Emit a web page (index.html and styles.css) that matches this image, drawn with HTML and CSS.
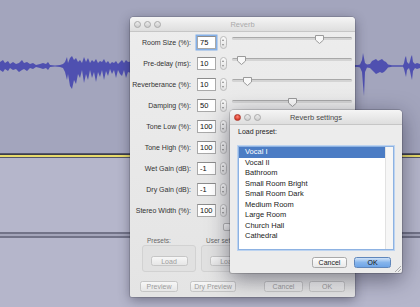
FILE: index.html
```html
<!DOCTYPE html>
<html lang="en">
<head>
  <meta charset="UTF-8" />
  <title>Reverb</title>
  <link rel="stylesheet" href="styles.css">
</head>
<body>

  <!-- Project window behind the dialogs -->
  <div class="project">
    <div class="track track-top">
      <svg class="wave" width="420" height="153" viewBox="0 0 420 153">
        <polygon points="0,62 3,60 5,63 8,61 10,64 13,62 16,64 19,63 22,60 24,63 27,62 30,64 33,63 36,65 40,64 43,63 46,64 48,62 50,65 55,65.5 60,65 63,64 65,62 67,57 68,63 70,58 72,56 74,60 76,58 78,62 80,60 82,63 84,57 86,62 88,58 90,63 92,60 94,62 96,59 98,63 100,61 102,62 104,59 106,63 108,61 110,64 112,62 114,63 116,61 118,64 120,62 122,60 124,63 126,60 128,62 134,61 134,74 128,72 126,78 124,70 122,76 120,74 118,70 116,78 114,70 112,74 110,69 108,76 106,71 104,80 102,70 100,77 98,72 96,82 94,72 92,78 90,70 88,80 86,74 84,83 82,70 80,78 78,74 76,84 74,80 72,89 70,86 68,74 67,80 65,72 63,68 60,67 55,66.5 50,67 48,70 46,68 43,69 40,68 36,67 33,69 30,68 27,71 24,69 22,70 19,72 16,69 13,70 10,68 8,71 5,69 3,72 0,70"/>
        <polygon points="345,65 358,65 360,64.5 362,60 363,53 364,58 365,63 367,64.5 370,64 372,61 374,60 376,59 378,61 380,60 382,59 384,61 386,62 388,64.5 392,65.2 403,65.2 404,63 405,58 406,56 407,62 409,64 410,61 411,57 412,55 413,62 415,64 417,63 420,64 420,68 417,69 415,68 413,71 412,80 411,76 410,71 409,68 407,70 406,77 405,73 404,69 403,66.8 392,66.8 388,67.5 386,70 384,72 382,73 380,72 378,73 376,74 374,72 372,70 370,68 367,67.5 365,72 364,96 363,85 362,72 360,67.5 358,67 345,67"/>
      </svg>
    </div>
    <div class="track-edge"></div>
    <div class="track track-low"></div>
    <div class="track-gap"></div>
    <div class="track track-low rest"></div>
  </div>

  <!-- Reverb effect dialog -->
  <div class="window reverb">
    <div class="titlebar">
      <span class="lights"><i></i><i></i><i></i></span>
      <span class="title">Reverb</span>
    </div>

    <div class="params">
      <label>Room Size (%):</label><span class="field focus">75</span><span class="spin"></span>
      <div class="slider"><svg class="thumb" style="left: 73%" width="9" height="9" viewBox="0 0 9 9"><path d="M0.5 0.5H8.5V5L4.5 8.5L0.5 5Z"/></svg></div>

      <label>Pre-delay (ms):</label><span class="field">10</span><span class="spin"></span>
      <div class="slider"><svg class="thumb" style="left: 8%" width="9" height="9" viewBox="0 0 9 9"><path d="M0.5 0.5H8.5V5L4.5 8.5L0.5 5Z"/></svg></div>

      <label>Reverberance (%):</label><span class="field">10</span><span class="spin"></span>
      <div class="slider"><svg class="thumb" style="left: 13%" width="9" height="9" viewBox="0 0 9 9"><path d="M0.5 0.5H8.5V5L4.5 8.5L0.5 5Z"/></svg></div>

      <label>Damping (%):</label><span class="field">50</span><span class="spin"></span>
      <div class="slider"><svg class="thumb" style="left: 50%" width="9" height="9" viewBox="0 0 9 9"><path d="M0.5 0.5H8.5V5L4.5 8.5L0.5 5Z"/></svg></div>

      <label>Tone Low (%):</label><span class="field">100</span><span class="spin"></span>
      <div class="slider"></div>

      <label>Tone High (%):</label><span class="field">100</span><span class="spin"></span>
      <div class="slider"></div>

      <label>Wet Gain (dB):</label><span class="field">-1</span><span class="spin"></span>
      <div class="slider"></div>

      <label>Dry Gain (dB):</label><span class="field">-1</span><span class="spin"></span>
      <div class="slider"></div>

      <label>Stereo Width (%):</label><span class="field">100</span><span class="spin"></span>
      <div class="slider"></div>
    </div>

    <div class="check-row"><span class="check"></span></div>

    <div class="groups">
      <div class="group">
        <div class="group-label">Presets:</div>
        <div class="group-box"><span class="btn load">Load</span></div>
      </div>
      <div class="group">
        <div class="group-label">User settings:</div>
        <div class="group-box"><span class="btn load">Load</span></div>
      </div>
    </div>

    <div class="actions">
      <span class="btn preview">Preview</span>
      <span class="btn dry">Dry Preview</span>
      <span class="spacer"></span>
      <span class="btn cancel">Cancel</span>
      <span class="btn okay">OK</span>
    </div>
  </div>

  <!-- Preset sheet -->
  <div class="window settings">
    <div class="titlebar">
      <span class="lights"><i class="close"></i><i></i><i></i></span>
      <span class="title active">Reverb settings</span>
    </div>
    <div class="sheet">
      <div class="sheet-label">Load preset:</div>
      <div class="list">
        <div class="items">
          <div class="sel">Vocal I</div>
          <div>Vocal II</div>
          <div>Bathroom</div>
          <div>Small Room Bright</div>
          <div>Small Room Dark</div>
          <div>Medium Room</div>
          <div>Large Room</div>
          <div>Church Hall</div>
          <div>Cathedral</div>
        </div>
        <div class="gutter"></div>
      </div>
      <div class="sheet-actions">
        <span class="btn plain">Cancel</span>
        <span class="btn default">OK</span>
      </div>
    </div>
    <svg class="grip" width="7" height="7" viewBox="0 0 7 7"><path d="M7 1L1 7M7 4L4 7"/></svg>
  </div>

</body>
</html>
```

FILE: styles.css
```css
* {
  box-sizing: border-box;
}

body {
  margin: 0;
  width: 420px;
  height: 307px;
  overflow: hidden;
  position: relative;
  background: #b5b6cb;
  font-family: 'Liberation Sans', Arial, sans-serif;
  color: #222;
}

/* project tracks */
.project {
  display: flex;
  flex-direction: column;
  height: 307px;
}

.track-top {
  height: 153px;
  background: #a3a5bd;
}

.wave {
  display: block;
  fill: #4f50b0;
}

.track-edge {
  height: 5px;
  background: linear-gradient(#55566a 0 1px, #3c3d4a 1px 2px, #e8db6a 2px 4px, #55566a 4px 5px);
}

.track-low {
  height: 74px;
  background: #b5b6cb;
}

.track-gap {
  height: 6px;
  background: linear-gradient(#727388 0 1.5px, #a3a4b9 1.5px 4px, #727388 4px 5.5px, #b5b6cb 5.5px);
}

.track-low.rest {
  flex: 1;
}

/* windows */
.window {
  position: absolute;
  display: flex;
  flex-direction: column;
  background: #ebebeb;
  border-radius: 4px 4px 2px 2px;
  box-shadow: 0 0 0 1px rgba(0,0,0,0.12), 0 3px 12px rgba(30,30,50,0.45);
}

.reverb {
  left: 130px;
  top: 17px;
  width: 225px;
  height: 280px;
  background: linear-gradient(#ededed, #e4e4e4);
}

.titlebar {
  position: relative;
  flex: none;
  height: 15px;
  display: flex;
  align-items: center;
  justify-content: center;
  background: linear-gradient(#f5f5f5, #dedede);
  border-bottom: 1px solid #c6c6c6;
  border-radius: 4px 4px 0 0;
}

.lights {
  position: absolute;
  left: 4px;
  top: 3.5px;
  display: flex;
  gap: 3px;
}

.lights i {
  width: 7px;
  height: 7px;
  border-radius: 50%;
  border: 1px solid #a9a9a9;
  background: linear-gradient(#ececec, #cdcdcd);
}

.lights i.close {
  border-color: #b03a2e;
  background: radial-gradient(circle at 50% 35%, #ff8a7a, #d83a2a 70%);
}

.title {
  font-size: 7.5px;
  color: #ababab;
}

.title.active {
  color: #4a4a4a;
}

/* parameter rows */
.params {
  display: grid;
  grid-template-columns: 61px 25px 11px 125px;
  grid-auto-rows: 21px;
  align-items: center;
}

.params label {
  font-size: 7px;
  color: #333;
  text-align: right;
  white-space: nowrap;
}

.field {
  margin-left: 6px;
  width: 19px;
  height: 13px;
  padding-left: 2px;
  border: 1px solid #a9a9a9;
  border-top-color: #8c8c8c;
  background: #fff;
  font-size: 7.5px;
  line-height: 11px;
  color: #111;
}

.field.focus {
  box-shadow: 0 0 0 1.5px #84b0e8;
}

.spin {
  position: relative;
  margin-left: 4px;
  width: 7px;
  height: 13px;
  border: 1px solid #bcbcbc;
  border-radius: 3.5px;
  background: linear-gradient(#fafafa, #e2e2e2);
}

.spin::before,
.spin::after {
  content: '';
  position: absolute;
  left: 1px;
  border-left: 1.5px solid transparent;
  border-right: 1.5px solid transparent;
}

.spin::before {
  top: 2px;
  border-bottom: 2px solid #8a8a8a;
}

.spin::after {
  bottom: 2px;
  border-top: 2px solid #8a8a8a;
}

.slider {
  position: relative;
  align-self: start;
  margin-top: 5px;
  margin-left: 5px;
  width: 120px;
  height: 3px;
  border-radius: 2px;
  border-top: 1px solid #a8a8a8;
  background: #d4d4d4;
}

.thumb {
  position: absolute;
  top: -3px;
  margin-left: -4.5px;
  fill: #f8f8f8;
  stroke: #9a9a9a;
  stroke-width: 1;
}

.check-row {
  height: 12px;
  padding: 2px 0 0 93px;
}

.check {
  display: block;
  width: 8px;
  height: 8px;
  border: 1px solid #b4b4b4;
  border-radius: 2px;
  background: linear-gradient(#fbfbfb, #e6e6e6);
}

/* preset groups */
.groups {
  display: flex;
  gap: 5px;
  padding-left: 12px;
  margin-top: 3px;
}

.group-label {
  height: 9px;
  padding-left: 5px;
  font-size: 6.5px;
  line-height: 9px;
  color: #666;
  white-space: nowrap;
}

.group-box {
  width: 54px;
  height: 27px;
  padding-top: 10px;
  display: flex;
  justify-content: center;
  border: 1px solid #d2d2d2;
  border-radius: 3px;
  background: #e1e1e1;
}

.btn {
  display: flex;
  align-items: center;
  justify-content: center;
  height: 11px;
  border: 1px solid #c6c6c6;
  border-radius: 2.5px;
  background: linear-gradient(#f7f7f7, #e6e6e6);
  font-size: 7px;
  color: #9c9c9c;
  white-space: nowrap;
}

.btn.load {
  width: 37px;
  height: 10px;
}

.actions {
  display: flex;
  margin-top: 9px;
  padding: 0 10px;
}

.preview { width: 38px; }
.dry { width: 46px; margin-left: 12px; }
.spacer { flex: 1; }
.cancel { width: 39px; }
.okay { width: 36px; margin-left: 6px; }

/* preset sheet */
.settings {
  left: 230px;
  top: 110px;
  width: 172px;
  height: 163px;
  background: #ececec;
  box-shadow: 0 0 0 1px rgba(0,0,0,0.15), 0 6px 22px rgba(20,20,40,0.5);
}

.sheet {
  padding: 0 8px;
}

.sheet-label {
  margin-top: 2px;
  height: 10px;
  font-size: 7px;
  line-height: 10px;
  color: #222;
}

.list {
  display: flex;
  margin-top: 9px;
  height: 104px;
  border: 1px solid #8db2e2;
  box-shadow: 0 0 0 1px #bcd3f0;
  background: #fff;
}

.items {
  flex: 1;
}

.items div {
  padding-left: 6px;
  font-size: 7.5px;
  line-height: 10.5px;
  color: #222;
}

.items .sel {
  background: #4b7cc4;
  color: #fff;
}

.gutter {
  width: 8px;
  border-left: 1px solid #e2e2e2;
  background: #f6f6f6;
}

.sheet-actions {
  display: flex;
  justify-content: flex-end;
  gap: 7px;
  margin: 7px 3px 0 0;
}

.btn.plain {
  width: 35px;
  color: #222;
  border-color: #a9a9a9;
  background: linear-gradient(#fdfdfd, #e9e9e9);
}

.btn.default {
  width: 37px;
  color: #111;
  border-color: #5f86bb;
  background: linear-gradient(#cfe2f8, #86b5ec 50%, #6ea4e6);
}

.grip {
  position: absolute;
  right: 1px;
  bottom: 1px;
  stroke: #9a9a9a;
  stroke-width: 0.8;
}
```
